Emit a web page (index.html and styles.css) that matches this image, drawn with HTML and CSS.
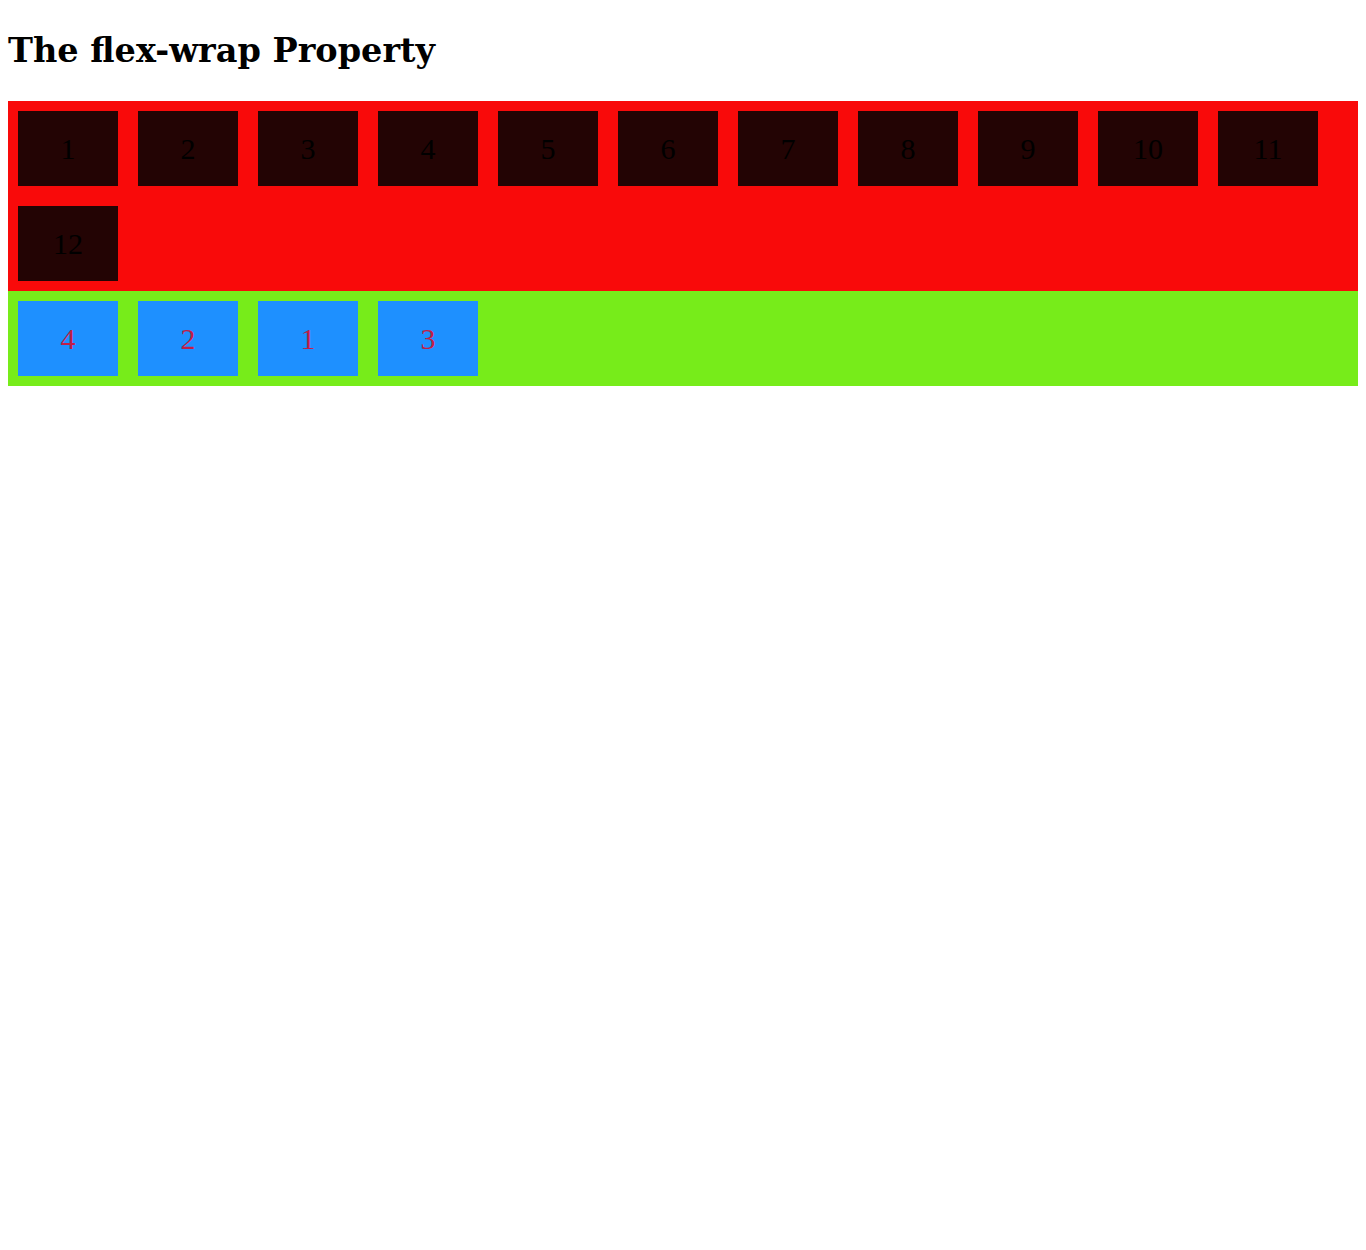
FILE: index.html
```html
<!DOCTYPE html>
<html lang="en">
<head>
<meta charset="UTF-8">
<title>The flex-wrap Property</title>
<link rel="stylesheet" href="styles.css">
</head>
<body>
<h1>The flex-wrap Property</h1>

<div class="flex-container">
    <div>1</div>
    <div>2</div>
    <div>3</div>
    <div>4</div>
    <div>5</div>
    <div>6</div>
    <div>7</div>
    <div>8</div>
    <div>9</div>
    <div>10</div>
    <div>11</div>
    <div>12</div>
</div>

<div class="order-container">
    <div>4</div>
    <div>2</div>
    <div>1</div>
    <div>3</div>
</div>
</body>
</html>
```

FILE: styles.css
```css
body {
    margin: 0;
    padding: 8px;
    font-family: "Liberation Serif", serif;
}

h1 {
    font-family: "DejaVu Serif", serif;
    font-size: 33.5px;
    line-height: 39px;
    margin: 23px 0 31px;
}

.flex-container {
    display: flex;
    flex-wrap: wrap;
    background-color: #f90a0a;
}

.flex-container > div {
    background-color: #230404;
    color: #000;
    width: 100px;
    margin: 10px;
    text-align: center;
    line-height: 75px;
    font-size: 30px;
}

.order-container {
    display: flex;
    background-color: #77ec1a;
}

.order-container > div {
    background-color: #1e90ff;
    color: #c01e48;
    width: 100px;
    margin: 10px;
    text-align: center;
    line-height: 75px;
    font-size: 30px;
}
```
